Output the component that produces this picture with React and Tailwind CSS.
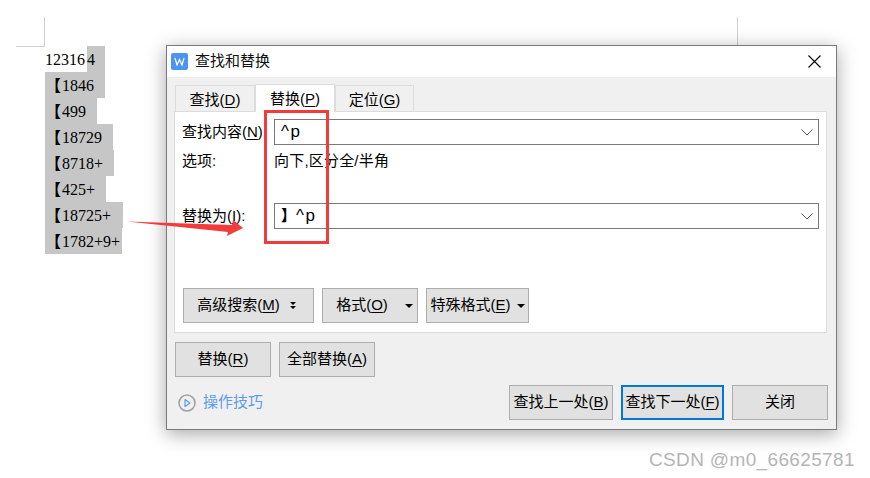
const UI_FONT = "font-['Liberation_Sans','Noto_Sans_CJK_SC',sans-serif]";

const ROWS = [
  { text: "1846", width: "w-[60px]" },
  { text: "499", width: "w-[52px]" },
  { text: "18729", width: "w-[68px]" },
  { text: "8718+", width: "w-[69px]" },
  { text: "425+", width: "w-[61px]" },
  { text: "18725+", width: "w-[78px]" },
  { text: "1782+9+", width: "w-[77px]" },
];

function Btn({ className = "", border = "border border-[#adadad]", children }) {
  return (
    <div className={`flex h-[35px] items-center justify-center bg-[#e1e1e1] text-[15px] text-black ${border} ${className}`}>
      {children}
    </div>
  );
}

function Key({ label, k, end = ")" }) {
  return (
    <span className="whitespace-nowrap">
      {label}(<span className="underline underline-offset-2">{k}</span>{end}
    </span>
  );
}

function Caret() {
  return <span className="h-0 w-0 border-x-[4px] border-t-[4px] border-x-transparent border-t-black" />;
}

function Field({ bracket, value }) {
  return (
    <div className="flex h-[26px] w-[545px] items-center justify-between border border-[#7a7a7a] bg-white pl-[6px] pr-[5px]">
      <span className="flex items-center text-black">
        {bracket && <span className="text-[15px] font-bold">{bracket}</span>}
        <span className="text-[17px] tracking-[1.5px]">{value}</span>
      </span>
      <svg width="12" height="7" viewBox="0 0 12 7" fill="none" stroke="#555" strokeWidth="1">
        <path d="M0.5 0.5L6 6l5.5-5.5" />
      </svg>
    </div>
  );
}

function Tab({ active, className = "", children }) {
  return (
    <div
      className={`flex items-center justify-center border-x border-t border-[#dcdcdc] text-[15px] ${
        active ? "z-10 -mb-px h-[28px] bg-white pt-[1px]" : "h-[26px] bg-[#f0f0f0] pt-[3px]"
      } ${className}`}
    >
      {children}
    </div>
  );
}

export default function App() {
  return (
    <div className={`relative h-[478px] w-[870px] overflow-hidden bg-white ${UI_FONT}`}>
      {/* page margin marks */}
      <div className="absolute left-[44px] top-[17px] h-[29px] w-px bg-[#d0d0d0]" />
      <div className="absolute left-[16px] top-[46px] h-px w-[29px] bg-[#d0d0d0]" />
      <div className="absolute left-[737px] top-[17px] h-[29px] w-px bg-[#d0d0d0]" />

      {/* document text */}
      <div className="flex flex-col pl-[45px] pt-[46px] font-['Liberation_Serif','Noto_Sans_CJK_SC',serif] text-[16px] text-black">
        <div className="flex h-[26px] w-[60px] items-center">
          <span className="w-[42px] pt-[2px]">12316</span>
          <span className="flex h-full flex-1 items-center bg-[#c6c6c6] pt-[2px]">4</span>
        </div>
        {ROWS.map((r) => (
          <div key={r.text} className={`flex h-[26px] items-center bg-[#c6c6c6] pt-[2px] ${r.width}`}>
            <span className="w-[17px] shrink-0 whitespace-nowrap text-[16px] font-bold leading-none">【</span>
            <span className="whitespace-nowrap">{r.text}</span>
          </div>
        ))}
      </div>

      {/* dialog */}
      <div className="absolute isolate left-[166px] top-[45px] flex h-[385px] w-[671px] flex-col border border-[#7a7a7a] bg-[#f0f0f0] shadow-[0_4px_18px_rgba(0,0,0,0.35)]">
        <div className="flex h-[31px] shrink-0 items-center justify-between bg-white pl-[4px] pr-[15px]">
          <div className="flex items-center gap-[7px]">
            <div className="flex h-[17px] w-[17px] items-center justify-center rounded-[2px] bg-[#4d94f2]">
              <svg width="11" height="9" viewBox="0 0 11 9" fill="none" stroke="white" strokeWidth="1.2">
                <path d="M1 1l2 7 2.5-5.5L8 8l2-7" />
              </svg>
            </div>
            <span className="text-[15px] text-[#111]">查找和替换</span>
          </div>
          <svg width="13" height="13" viewBox="0 0 13 13" stroke="black" strokeWidth="1.1">
            <path d="M0.5 0.5l12 12M12.5 0.5l-12 12" />
          </svg>
        </div>

        {/* tabs */}
        <div className="flex h-[34px] shrink-0 items-end pl-[8px]">
          <Tab className="w-[80px]"><Key label="查找" k="D" /></Tab>
          <Tab active className="w-[80px]"><Key label="替换" k="P" /></Tab>
          <Tab className="w-[79px]"><Key label="定位" k="G" /></Tab>
        </div>

        {/* panel */}
        <div className="ml-[7px] flex h-[222px] w-[653px] shrink-0 flex-col border border-[#dcdcdc] bg-white pl-[7px] pt-[7px] text-[15px] text-black">
          <div className="flex items-center">
            <span className="w-[92px]"><Key label="查找内容" k="N" end="):" /></span>
            <Field value="^p" />
          </div>
          <div className="mt-[4px] flex h-[24px] items-center">
            <span className="w-[92px]">选项:</span>
            <span className="tracking-[0.2px]">向下,区分全/半角</span>
          </div>
          <div className="mt-[30px] flex items-center">
            <span className="w-[92px]"><Key label="替换为" k="I" end="):" /></span>
            <Field bracket="】" value="^p" />
          </div>
          <div className="mt-[59px] flex gap-[8px] pl-px">
            <Btn className="w-[131px] gap-[10px] pr-[4px]">
              <Key label="高级搜索" k="M" />
              <svg width="6" height="8" viewBox="0 0 6 8" fill="black">
                <path d="M0 0h6L3 3zM0 4h6L3 7z" />
              </svg>
            </Btn>
            <Btn className="w-[96px] gap-[17px] pl-[9px]">
              <Key label="格式" k="O" />
              <Caret />
            </Btn>
            <Btn className="w-[103px] gap-[6px]">
              <Key label="特殊格式" k="E" />
              <Caret />
            </Btn>
          </div>
        </div>

        <div className="ml-[8px] mt-[9px] flex gap-[8px]">
          <Btn className="w-[96px]"><Key label="替换" k="R" /></Btn>
          <Btn className="w-[96px]"><Key label="全部替换" k="A" /></Btn>
        </div>

        <div className="ml-[11px] mt-[8px] flex items-center">
          <svg width="18" height="18" viewBox="0 0 18 18" fill="none">
            <circle cx="9" cy="9" r="8" stroke="#a3a3a3" strokeWidth="1.6" />
            <path d="M7 5.5l5 3.5-5 3.5z" stroke="#5b9bf0" strokeWidth="1.2" strokeLinejoin="round" />
          </svg>
          <span className="ml-[7px] w-[61px] whitespace-nowrap text-[15px] text-[#5b9bf0]">操作技巧</span>
          <div className="ml-[245px] flex gap-[8px]">
            <Btn className="w-[104px]"><Key label="查找上一处" k="B" /></Btn>
            <Btn className="w-[103px]" border="border-2 border-[#0078d7]"><Key label="查找下一处" k="F" /></Btn>
            <Btn className="w-[96px]">关闭</Btn>
          </div>
        </div>
      </div>

      {/* red annotations */}
      <div className="absolute left-[264px] top-[110px] h-[134px] w-[65px] border-[3px] border-[#f23c3c]" />
      <svg className="absolute left-[126px] top-[218px]" width="120" height="20" viewBox="0 0 120 20">
        <path d="M1 3.5 L106 7 L107 2 L117 10 L101 18 L102 14 Z" fill="#f23c3c" />
      </svg>

      {/* watermark */}
      <div className="absolute left-[649px] top-[449px] whitespace-nowrap font-['Liberation_Sans',sans-serif] text-[19px] leading-[22px] tracking-[0.35px] text-[#b5b5b5]">
        CSDN @m0_66625781
      </div>
    </div>
  );
}
